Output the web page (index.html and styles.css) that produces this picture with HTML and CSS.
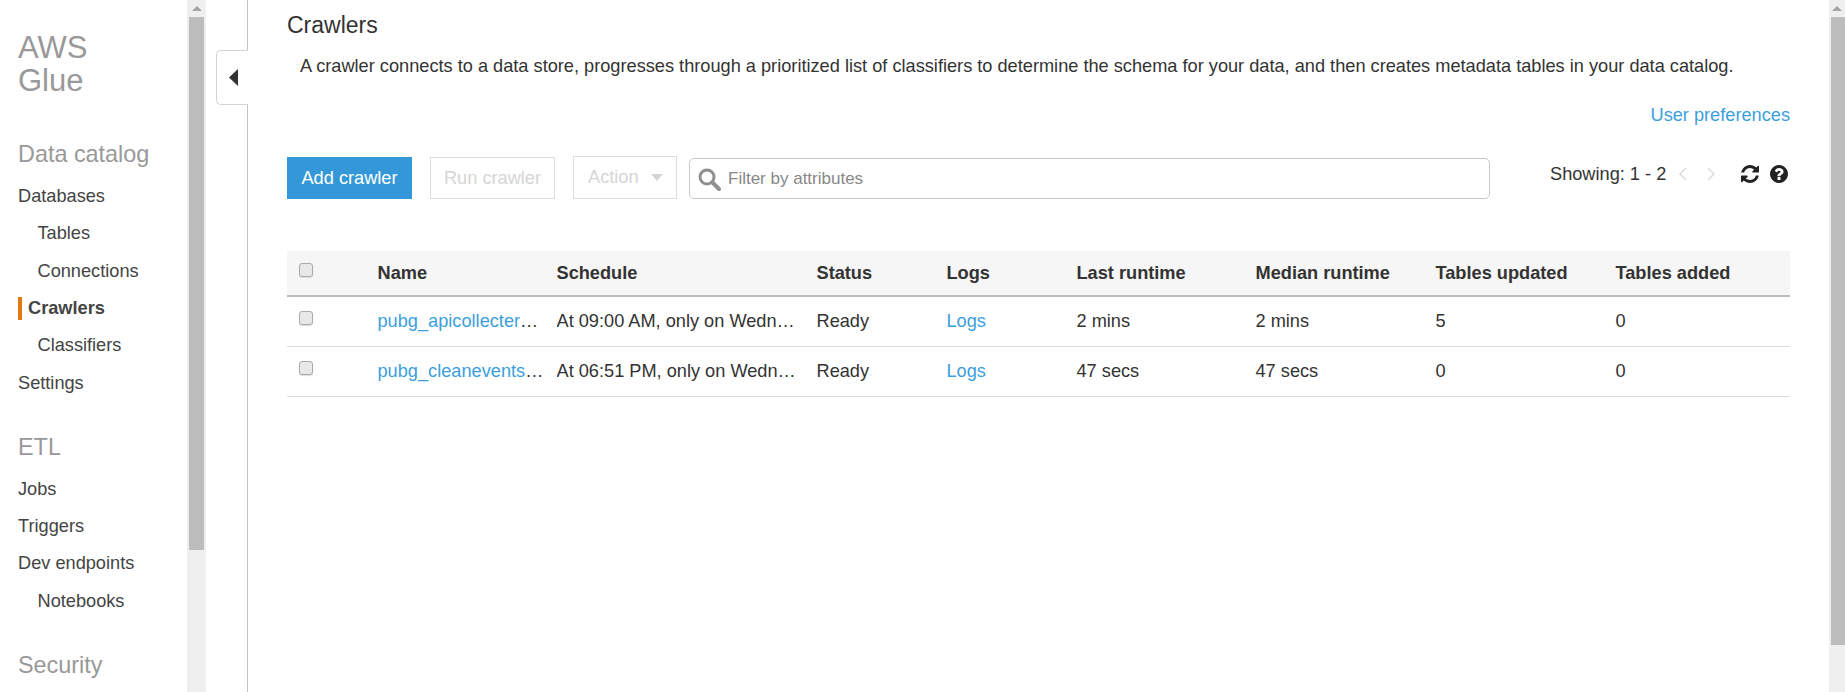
FILE: index.html
```html
<!DOCTYPE html>
<html lang="en">
<head>
<meta charset="utf-8">
<title>AWS Glue - Crawlers</title>
<link rel="stylesheet" href="styles.css">
</head>
<body>
<div class="app">
  <aside class="sidebar">
    <nav class="nav">
      <h1 class="brand">AWS<br>Glue</h1>
      <h2 class="nav-title first">Data catalog</h2>
      <a class="nav-item">Databases</a>
      <a class="nav-item sub">Tables</a>
      <a class="nav-item sub">Connections</a>
      <a class="nav-item active">Crawlers</a>
      <a class="nav-item sub">Classifiers</a>
      <a class="nav-item">Settings</a>
      <h2 class="nav-title">ETL</h2>
      <a class="nav-item">Jobs</a>
      <a class="nav-item">Triggers</a>
      <a class="nav-item">Dev endpoints</a>
      <a class="nav-item sub">Notebooks</a>
      <h2 class="nav-title">Security</h2>
    </nav>
    <div class="scrollbar side-bar">
      <div class="scroll-up"><svg width="10" height="5" viewBox="0 0 10 5"><path d="M5 0 10 5H0z" fill="#a3a3a3"/></svg></div>
      <div class="scroll-thumb side-thumb"></div>
    </div>
  </aside>
  <div class="toggle-col">
    <div class="toggle"><svg width="9" height="17" viewBox="0 0 9 17"><path d="M9 0V17L0 8.500z" fill="#333"/></svg></div>
  </div>
  <main class="main">
    <h2 class="page-title">Crawlers</h2>
    <p class="intro">A crawler connects to a data store, progresses through a prioritized list of classifiers to determine the schema for your data, and then creates metadata tables in your data catalog.</p>
    <div class="prefs"><a class="link">User preferences</a></div>
    <div class="toolbar">
      <button class="btn primary">Add crawler</button>
      <button class="btn disabled">Run crawler</button>
      <button class="btn disabled action">Action<span class="caret"></span></button>
      <div class="filter">
        <svg class="search" width="24" height="24" viewBox="0 0 24 24"><circle cx="10" cy="10" r="7" fill="none" stroke="#8f8f8f" stroke-width="3"/><path d="M15.500 15.500 22 22" stroke="#8f8f8f" stroke-width="4" stroke-linecap="round"/></svg>
        <span class="filter-text">Filter by attributes</span>
      </div>
      <div class="pager">
        <span>Showing: 1 - 2</span>
        <svg class="chev" width="10" height="14" viewBox="0 0 10 14"><path d="M8 1 2 7l6 6" fill="none" stroke="#dcdcdc" stroke-width="1.600"/></svg>
        <svg class="chev next" width="10" height="14" viewBox="0 0 10 14"><path d="M2 1l6 6-6 6" fill="none" stroke="#dcdcdc" stroke-width="1.600"/></svg>
        <svg class="refresh" width="18" height="18" viewBox="0 0 1536 1536"><path fill="#222" d="M1511 928q0 5-1 7-64 268-268 434.500T764 1536q-146 0-282.500-55T238 1324l-129 129q-19 19-45 19t-45-19-19-45V960q0-26 19-45t45-19h448q26 0 45 19t19 45-19 45l-137 137q71 66 161 102t187 36q134 0 250-65t186-179q11-17 53-117 8-23 30-23h192q13 0 22.500 9.500t9.500 22.500zm25-800v448q0 26-19 45t-45 19h-448q-26 0-45-19t-19-45 19-45l138-138q-148-137-349-137-134 0-250 65T332 500q-11 17-53 117-8 23-30 23H50q-13 0-22.500-9.500T18 608v-7q65-268 270-434.500T768 0q146 0 284 55.500T1297 212l130-129q19-19 45-19t45 19 19 45z"/></svg>
        <svg class="help" width="18" height="18" viewBox="0 0 1536 1536"><path fill="#222" d="M896 1248v-192q0-14-9-23t-23-9H672q-14 0-23 9t-9 23v192q0 14 9 23t23 9h192q14 0 23-9t9-23zm256-672q0-88-55.500-163T958 297t-170-41q-243 0-371 213-15 24 8 42l132 100q7 6 19 6 16 0 25-12 53-68 86-92 34-24 86-24 48 0 85.500 26t37.500 59q0 38-20 61t-68 45q-63 28-115.500 86.500T640 889v36q0 14 9 23t23 9h192q14 0 23-9t9-23q0-19 21.500-49.500T972 826q32-18 49-28.500t46-35 44.500-48 28-60.500 12.500-78zm384 192q0 209-103 385.500T1153.500 1433 768 1536t-385.500-103T103 1153.500 0 768t103-385.500T382.500 103 768 0t385.500 103T1433 382.500 1536 768z"/></svg>
      </div>
    </div>
    <table class="grid">
      <thead>
        <tr>
          <th class="c-check"><span class="check"></span></th>
          <th class="c-name">Name</th><th class="c-sched">Schedule</th><th class="c-status">Status</th><th class="c-logs">Logs</th><th class="c-last">Last runtime</th><th class="c-median">Median runtime</th><th class="c-upd">Tables updated</th><th>Tables added</th>
        </tr>
      </thead>
      <tbody>
        <tr>
          <td class="c-check"><span class="check"></span></td>
          <td><div class="clip"><a class="link">pubg_apicollecter_crawler</a></div></td>
          <td><div class="clip wide-gap">At 09:00 AM, only on Wednesday</div></td>
          <td>Ready</td><td><a class="link">Logs</a></td><td>2 mins</td><td>2 mins</td><td>5</td><td>0</td>
        </tr>
        <tr>
          <td class="c-check"><span class="check"></span></td>
          <td><div class="clip"><a class="link">pubg_cleanevents_crawler</a></div></td>
          <td><div class="clip wide-gap">At 06:51 PM, only on Wednesday</div></td>
          <td>Ready</td><td><a class="link">Logs</a></td><td>47 secs</td><td>47 secs</td><td>0</td><td>0</td>
        </tr>
      </tbody>
    </table>
  </main>
  <div class="scrollbar page-bar">
    <div class="scroll-up"><svg width="10" height="5" viewBox="0 0 10 5"><path d="M5 0 10 5H0z" fill="#a3a3a3"/></svg></div>
    <div class="scroll-thumb page-thumb"></div>
  </div>
</div>
</body>
</html>
```
FILE: styles.css
```css
* { box-sizing: border-box; }
html, body { margin: 0; height: 100%; overflow: hidden; }
body { font-family: "Liberation Sans", Arial, sans-serif; font-size: 18.200px; color: #333; background: #fff; }
.app { display: flex; height: 692px; width: 1845px; overflow: hidden; }

.sidebar { display: flex; width: 206px; flex: none; height: 100%; }
.nav { width: 187px; flex: none; padding: 31px 0 0 18px; overflow: hidden; }
.brand { margin: 0; font-size: 31px; line-height: 33px; font-weight: 400; color: #999; }
.nav-title { margin: 30.500px 0 9.700px; font-size: 23.400px; line-height: 28px; font-weight: 400; color: #999; }
.nav-title.first { margin-top: 43px; }
.nav-item { display: block; height: 37.450px; line-height: 37.450px; font-size: 18.200px; color: #444; white-space: nowrap; }
.nav-item.sub { padding-left: 19.500px; }
.nav-item.active { position: relative; padding-left: 10px; font-weight: 700; }
.nav-item.active::before { content: ""; position: absolute; left: 0; top: 7px; width: 4px; height: 23px; background: #e47911; }

.scrollbar { background: #efefef; flex: none; display: flex; flex-direction: column; align-items: flex-end; height: 100%; }
.side-bar { width: 19px; padding-right: 2px; }
.page-bar { width: 16px; }
.scroll-up { width: 100%; height: 17px; display: flex; align-items: center; justify-content: center; }
.side-bar .scroll-up { margin-right: -2px; width: 19px; }
.scroll-thumb { background: #bdbdbd; }
.side-thumb { width: 15px; height: 533px; }
.page-thumb { width: 14px; height: 628px; }

.toggle-col { flex: none; width: 42px; border-right: 1px solid #c4c4c4; padding: 50px 0 0 10px; height: 100%; }
.toggle { width: 32px; height: 55px; margin-right: -1px; background: #fff; border: 1px solid #d5d5d5; border-right: 0; border-radius: 5px 0 0 5px; display: flex; align-items: center; padding-left: 12px; position: relative; }

.main { flex: 1; min-width: 0; padding: 12px 39px 0 39px; }
.page-title { margin: 0; font-size: 23px; line-height: 26px; font-weight: 400; color: #333; }
.intro { margin: 17px 0 0 13px; line-height: 22px; color: #333; white-space: nowrap; }
.prefs { text-align: right; margin-top: 27px; line-height: 22px; }
.link { color: #3b9fdd; text-decoration: none; }

.toolbar { display: flex; align-items: flex-start; margin-top: 31px; height: 42px; }
.btn { font: inherit; height: 42px; padding: 0; background: #fff; border: 1px solid #ddd; }
.btn.primary { width: 125px; background: #3498d8; border-color: #3498d8; color: #fff; }
.btn.disabled { color: #d5d5d5; margin-left: 18px; width: 125px; }
.btn.action { width: 104px; height: 43px; margin-top: -1px; text-align: left; padding-left: 14px; display: flex; align-items: center; }
.caret { margin-left: 12px; width: 0; height: 0; border: 6.500px solid transparent; border-top: 7px solid #d5d5d5; border-bottom: 0; }
.filter { margin-left: 12px; width: 801px; height: 41px; border: 1px solid #c8c8c8; border-radius: 5px; display: flex; align-items: center; padding-left: 7px; margin-top: 1px; }
.search { flex: none; }
.filter-text { margin-left: 7px; color: #888; font-size: 17px; }
.pager { flex: 1; display: flex; align-items: center; height: 34px; padding-left: 60px; white-space: nowrap; color: #333; }
.chev { margin-left: 12px; }
.chev.next { margin-left: 18px; }
.refresh { margin-left: 25px; }
.help { margin-left: 11px; }

.grid { margin-top: 52px; width: 1503px; border-collapse: collapse; table-layout: fixed; }
.grid th { height: 45px; background: #f6f6f6; text-align: left; font-weight: 700; border-bottom: 2px solid #bdbdbd; padding: 0; color: #333; }
.grid td { height: 50px; border-bottom: 1px solid #dcdcdc; padding: 0; color: #333; }
.c-check { width: 90.500px; padding-left: 12px !important; }
.c-name { width: 179px; }
.c-sched { width: 260px; }
.c-status { width: 130px; }
.c-logs { width: 130px; }
.c-last { width: 179px; }
.c-median { width: 180px; }
.c-upd { width: 180px; }
.check { display: block; width: 14px; height: 14px; margin-top: -6px; background: #e8e8e8; border: 1px solid #aaa; border-radius: 3px; box-shadow: 0 1px 1px #ddd; }
.clip { overflow: hidden; white-space: nowrap; text-overflow: ellipsis; padding-right: 10px; }
.clip.wide-gap { padding-right: 18px; }
```
